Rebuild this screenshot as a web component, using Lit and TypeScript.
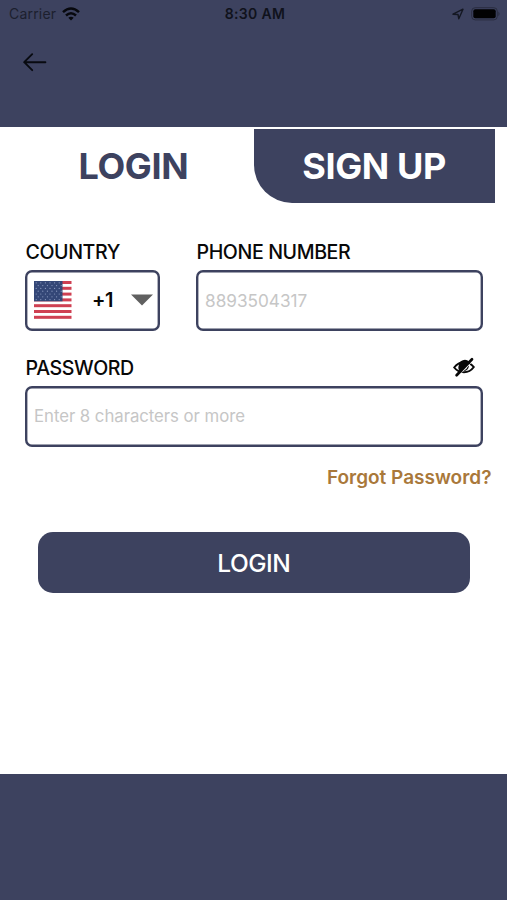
import { LitElement, html, css, svg } from "lit";
import { customElement } from "lit/decorators.js";

const flagStripes = [0, 1, 2, 3, 4, 5, 6];
const starRows = [0, 1, 2, 3, 4, 5, 6];

@customElement("app-root")
export class AppRoot extends LitElement {
  static styles = css`
    :host {
      display: flex;
      flex-direction: column;
      box-sizing: border-box;
      width: 507px;
      height: 900px;
      overflow: hidden;
      background: #fff;
      color: #080808;
      font-family: Inter, "Liberation Sans", sans-serif;
      --navy: #3d425f;
    }
    * { box-sizing: border-box; }
    svg { display: block; flex: none; }
    button { font: inherit; border: 0; padding: 0; background: none; color: inherit; }
    .header { height: 126.5px; background: var(--navy); flex: none; }
    .status {
      display: grid;
      grid-template-columns: 1fr auto 1fr;
      align-items: center;
      height: 27px;
      padding: 0 6px 0 9px;
      font-size: 14px;
      color: #10121c;
    }
    .carrier { display: flex; align-items: center; gap: 6px; letter-spacing: 0.2px; }
    .carrier span { color: #1c1f2e; }
    .time { font-weight: 600; letter-spacing: 0.35px; }
    .indicators { display: flex; justify-content: flex-end; align-items: center; gap: 7px; }
    .back { display: block; margin: 25px 0 0 22px; }
    .tabs { display: flex; padding: 2.5px 12.5px 0 13px; height: 76px; flex: none; }
    .tab { flex: 1; font-size: 36px; font-weight: 700; line-height: 75px; height: 73.5px; text-align: center; color: var(--navy); letter-spacing: -0.35px; }
    .tab.signup { color: #fff; background: var(--navy); border-bottom-left-radius: 38px; }
    .form { padding: 37px 24.5px 0 25px; display: flex; flex-direction: column; flex: 1; }
    .row { display: flex; gap: 36px; }
    .group { display: flex; flex-direction: column; }
    .group.country { width: 135px; }
    .group.phone { flex: 1; }
    .label { height: 24px; line-height: 24px; font-size: 19.6px; margin-bottom: 6.5px; white-space: nowrap; padding-left: 0.5px; font-weight: 450; letter-spacing: -0.4px; }
    .box {
      display: flex;
      align-items: center;
      height: 60.5px;
      box-shadow: inset 0 0 0 2.4px var(--navy);
      border-radius: 7px;
      padding: 0 9px;
      background: #fff;
      font-size: 17.2px;
      color: #c6c6c6;
    }
    .hint { font-size: 16.8px; letter-spacing: -0.05px; }
    .code { margin-left: 20px; margin-right: 18px; font-size: 20px; font-weight: 600; color: #080808; letter-spacing: -0.5px; }
    .password { margin-top: 25px; }
    .labelrow { display: flex; justify-content: space-between; padding-right: 8px; }
    .forgot { align-self: flex-end; margin: 18.5px -9px 0 0; height: 26px; line-height: 26px; font-size: 19px; font-weight: 600; color: #a9783a; white-space: nowrap; }
    .submit { display: block; width: 432.5px; height: 61px; margin: 41px 0 0 12.5px; padding-top: 1px; border-radius: 15px; background: var(--navy); color: #fff; font-size: 24.5px; font-weight: 500; letter-spacing: -0.5px; }
    .footer { height: 126px; flex: none; background: var(--navy); }
  `;

  private flag() {
    return html`<svg width="38" height="38" viewBox="0 0 38 38">
      <rect width="38" height="38" fill="#fff" />
      ${flagStripes.map((i) => svg`<rect x="0" y=${i * 5.8} width="37.5" height="3" fill="#cf4052" />`)}
      <rect width="28.5" height="20.3" fill="#344777" />
      ${starRows.map((r) =>
        [0, 1, 2, 3, 4, 5].map(
          (c) => svg`<circle cx=${2.2 + c * 4.6 + (r % 2) * 2} cy=${1.8 + r * 2.8} r="0.6" fill="#8e9dc2" />`
        )
      )}
    </svg>`;
  }

  render() {
    return html`
      <div class="header">
        <div class="status">
          <div class="carrier">
            <span>Carrier</span>
            <svg width="18" height="14" viewBox="0 0 18 14" fill="none" stroke="#07080d" stroke-width="2.5">
              <path d="M1 5.2Q9-2.2 17 5.2" />
              <path d="M4 8.5Q9 4 14 8.5" />
              <path d="M9 13.6L6.3 10.8Q9 8.6 11.7 10.8Z" fill="#07080d" stroke="none" />
            </svg>
          </div>
          <div class="time">8:30 AM</div>
          <div class="indicators">
            <svg width="12" height="12" viewBox="0 0 12 12">
              <path d="M1 6.2L11 1.2L6.8 10.8L6 6.5Z" fill="none" stroke="#141722" stroke-width="1.4" stroke-linejoin="round" />
            </svg>
            <svg width="30" height="14" viewBox="0 0 30 14">
              <rect x="0.7" y="0.7" width="25.6" height="12.2" rx="3.5" fill="none" stroke="#2a2d40" />
              <rect x="2.3" y="2.3" width="22.4" height="9" rx="2" fill="#020203" />
              <path d="M27.4 4.5Q29.7 6.8 27.4 9.2Z" fill="#2a2d40" />
            </svg>
          </div>
        </div>
        <button class="back" aria-label="Back">
          <svg width="25" height="20" viewBox="0 0 25 20" fill="none" stroke="#080a10" stroke-width="1.9" stroke-linecap="round" stroke-linejoin="round">
            <path d="M10.2 2.2L2.2 10.2L10.2 18.2M2.2 10.2H23.4" />
          </svg>
        </button>
      </div>
      <div class="tabs">
        <div class="tab">LOGIN</div>
        <div class="tab signup">SIGN UP</div>
      </div>
      <div class="form">
        <div class="row">
          <div class="group country">
            <div class="label">COUNTRY</div>
            <div class="box">
              ${this.flag()}
              <span class="code">+1</span>
              <svg width="22" height="12" viewBox="0 0 22 12"><path d="M0 0.5H22L11 11.5Z" fill="#606060" /></svg>
            </div>
          </div>
          <div class="group phone">
            <div class="label">PHONE NUMBER</div>
            <div class="box"><span class="number">8893504317</span></div>
          </div>
        </div>
        <div class="group password">
          <div class="labelrow">
            <div class="label">PASSWORD</div>
            <svg width="22" height="22" viewBox="0 0 22 22" fill="none" stroke="#080808">
              <path d="M1.2 11.5Q5 6.2 11 6.2T20.8 11Q17 16.3 11 16.3T1.2 11.5Z" stroke-width="2" />
              <path d="M16.2 5.8A6 6 0 0 0 5.8 9.3A5.8 5.8 0 0 0 7.2 15.6Z" fill="#080808" stroke="none" />
              <path d="M15.3 9.5Q15 13.8 11.2 14.5" stroke-width="1.2" />
              <path d="M5 20.3L20.5 4.3" stroke="#fff" stroke-width="0.8" />
              <path d="M3.6 19.2L19 3.2" stroke-width="2.7" stroke-linecap="round" />
            </svg>
          </div>
          <div class="box"><span class="hint">Enter 8 characters or more</span></div>
        </div>
        <div class="forgot">Forgot Password?</div>
        <button class="submit">LOGIN</button>
      </div>
      <div class="footer"></div>
    `;
  }
}
